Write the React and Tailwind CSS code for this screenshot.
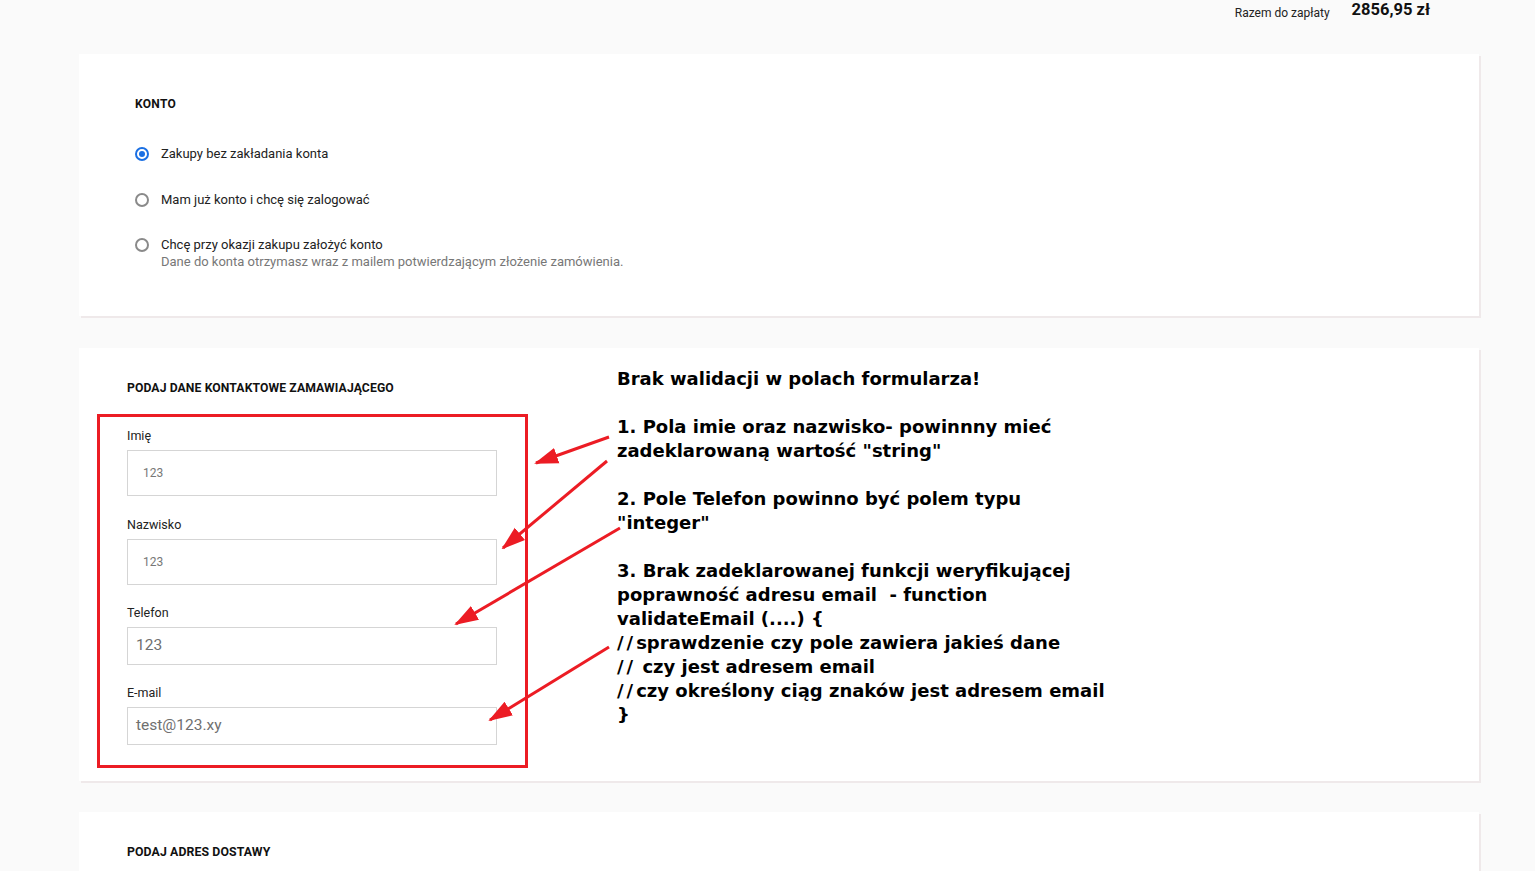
import React from "react";

const site = { fontFamily: "Roboto, 'Noto Sans', sans-serif" };
const note = { fontFamily: "'DejaVu Sans', Verdana, sans-serif" };

function Radio({ checked }) {
  return checked ? (
    <span className="flex h-[14px] w-[14px] shrink-0 items-center justify-center rounded-full border-2 border-[#1a6fe3]">
      <span className="h-[6px] w-[6px] rounded-full bg-[#1a6fe3]" />
    </span>
  ) : (
    <span className="h-[14px] w-[14px] shrink-0 rounded-full border-2 border-[#8a8a8a]" />
  );
}

function Field({ label, value, tall, mt }) {
  return (
    <div className={mt}>
      <div className="h-[16px] text-[12.5px] leading-[16px] text-[#222]">{label}</div>
      <div
        className={
          "mt-[6px] flex w-[370px] items-center border border-[#d5d5d5] bg-white " +
          (tall ? "h-[46px] pl-[15px] text-[12px] text-[#777]" : "h-[38px] pl-[8px] text-[15.5px] text-[#6f6f6f]")
        }
      >
        {value}
      </div>
    </div>
  );
}

const lines = [
  "Brak walidacji w polach formularza!",
  "",
  "1. Pola imie oraz nazwisko- powinnny mieć",
  'zadeklarowaną wartość "string"',
  "",
  "2. Pole Telefon powinno być polem typu",
  '"integer"',
  "",
  "3. Brak zadeklarowanej funkcji weryfikującej",
  "poprawność adresu email  - function",
  "validateEmail (....) {",
  "//sprawdzenie czy pole zawiera jakieś dane",
  "// czy jest adresem email",
  "//czy określony ciąg znaków jest adresem email",
  "}",
];

function NoteLine({ text }) {
  if (text.startsWith("//")) {
    return (
      <div className="h-[24px] whitespace-pre">
        <span className="tracking-[3px]">//</span>
        {text.slice(2)}
      </div>
    );
  }
  return <div className="h-[24px] whitespace-pre">{text}</div>;
}

export default function App() {
  return (
    <div className="relative min-h-[871px] w-full overflow-hidden bg-[#fafafa]" style={site}>
      <div className="ml-[79px] w-[1400px]">
        <div className="flex h-[54px] items-start justify-end pr-[49px] pt-[1px]">
          <span className="mt-[3px] text-[12px] text-[#222]">Razem do zapłaty</span>
          <span className="ml-[22px] text-[16.5px] font-bold leading-[18px] text-[#111]">2856,95 zł</span>
        </div>

        <div className="h-[262px] bg-white px-[56px] pt-[42px] shadow-[2px_2px_0_#efe9ea]">
          <div className="h-[16px] text-[12px] font-bold leading-[16px] tracking-[0.3px] text-[#111]">KONTO</div>
          <div className="mt-[34px] flex h-[16px] items-center gap-[12px] text-[13px] text-[#222]">
            <Radio checked />
            <span>Zakupy bez zakładania konta</span>
          </div>
          <div className="mt-[30px] flex h-[16px] items-center gap-[12px] text-[13px] text-[#222]">
            <Radio />
            <span>Mam już konto i chcę się zalogować</span>
          </div>
          <div className="mt-[29px] flex h-[16px] items-center gap-[12px] text-[13px] text-[#222]">
            <Radio />
            <span>Chcę przy okazji zakupu założyć konto</span>
          </div>
          <div className="ml-[26px] mt-[1px] text-[13px] leading-[16px] text-[#777]">
            Dane do konta otrzymasz wraz z mailem potwierdzającym złożenie zamówienia.
          </div>
        </div>

        <div className="relative mt-[32px] h-[433px] bg-white px-[48px] pt-[32px] shadow-[2px_2px_0_#efe9ea]">
          <div className="h-[16px] text-[12.2px] font-bold leading-[16px] tracking-[0.1px] text-[#111]">
            PODAJ DANE KONTAKTOWE ZAMAWIAJĄCEGO
          </div>
          <Field label="Imię" value="123" tall mt="mt-[32px]" />
          <Field label="Nazwisko" value="123" tall mt="mt-[21px]" />
          <Field label="Telefon" value="123" mt="mt-[20px]" />
          <Field label="E-mail" value="test@123.xy" mt="mt-[20px]" />

          <div className="pointer-events-none absolute left-[18px] top-[66px] h-[354px] w-[431px] border-[3px] border-[#ec1c24]" />

          <div
            className="absolute left-[538px] top-[19px] text-[18px] font-bold leading-[24px] text-black"
            style={note}
          >
            {lines.map((t, i) => (
              <NoteLine key={i} text={t} />
            ))}
          </div>
        </div>

        <div className="mt-[31px] h-[80px] bg-white px-[48px] pt-[32px] shadow-[2px_2px_0_#efe9ea]">
          <div className="h-[16px] text-[12.3px] font-bold leading-[16px] tracking-[0.1px] text-[#111]">PODAJ ADRES DOSTAWY</div>
        </div>
      </div>

      <svg className="pointer-events-none absolute left-0 top-0" width="1535" height="871">
        <defs>
          <marker id="ah" markerUnits="userSpaceOnUse" markerWidth="24" markerHeight="18" refX="22" refY="9" orient="auto">
            <path d="M0,1 L24,9 L0,17 Z" fill="#ec1c24" />
          </marker>
        </defs>
        <g stroke="#ec1c24" strokeWidth="3" fill="none">
          <line x1="609" y1="437" x2="536" y2="463" markerEnd="url(#ah)" />
          <line x1="607" y1="461" x2="503" y2="548" markerEnd="url(#ah)" />
          <line x1="620" y1="528" x2="456" y2="624" markerEnd="url(#ah)" />
          <line x1="609" y1="647" x2="490" y2="720" markerEnd="url(#ah)" />
        </g>
      </svg>
    </div>
  );
}
